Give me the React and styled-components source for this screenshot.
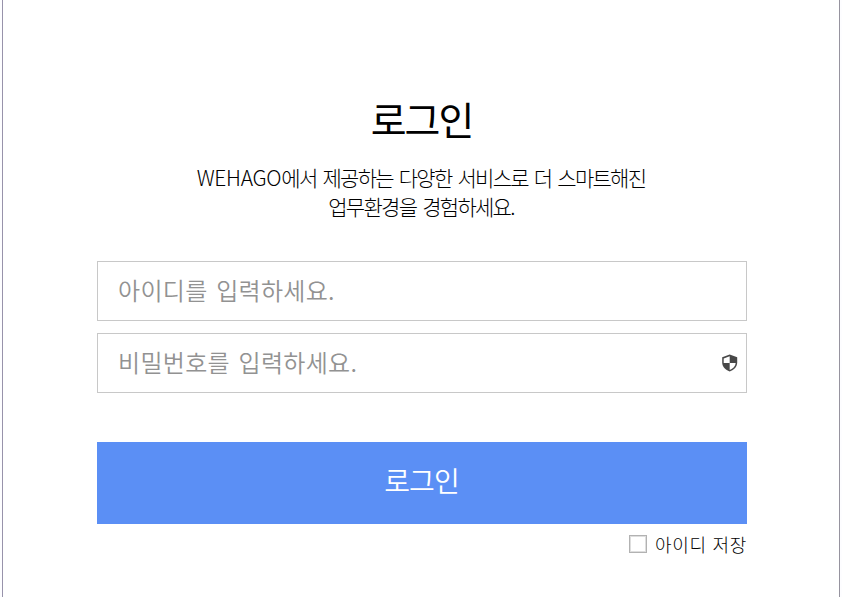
import React, {useState} from "react";
import styled, {createGlobalStyle} from "styled-components";

const GlobalStyle = createGlobalStyle`
    * {
        box-sizing: border-box;
    }

    body {
        margin: 0;
        background: #fdfdff;
        overflow: hidden;
        font-family: "Noto Sans CJK KR", sans-serif;
    }
`

function App() {
    const [userId, setUserId] = useState("");
    const [password, setPassword] = useState("");
    const [saveId, setSaveId] = useState(false);

    return (
        <>
            <GlobalStyle/>
            <LoginPanel>
                <LoginForm onSubmit={(e) => e.preventDefault()}>
                    <Title>로그인</Title>
                    <Description>
                        <Line><Brand>WEHAGO</Brand>에서 제공하는 다양한 서비스로 더 스마트해진</Line>
                        <Line>업무환경을 경험하세요.</Line>
                    </Description>
                    <InputBox>
                        <Input type="text" placeholder="아이디를 입력하세요." value={userId}
                               onChange={(e) => setUserId(e.target.value)}/>
                    </InputBox>
                    <InputBox>
                        <Input type="password" placeholder="비밀번호를 입력하세요." value={password}
                               onChange={(e) => setPassword(e.target.value)}/>
                        <ShieldIcon/>
                    </InputBox>
                    <LoginButton type="submit">로그인</LoginButton>
                    <SaveId>
                        <CheckBox type="checkbox" checked={saveId}
                                  onChange={(e) => setSaveId(e.target.checked)}/>
                        <span>아이디 저장</span>
                    </SaveId>
                </LoginForm>
            </LoginPanel>
        </>
    );
}

function ShieldIcon() {
    return (
        <svg width="16" height="18" viewBox="0 0 16 18">
            <path d="M7.7 .5 15.2 3.3V8.5C15.2 12.7 12.1 16 7.7 17.5 3.3 16 .2 12.7 .2 8.5V3.3Z" fill="#484848"/>
            <path d="M7.7 2.3V9H1.7V4.5Z" fill="#fff"/>
            <path d="M7.7 9H13.7C13.4 12.3 11.1 14.7 7.7 15.9Z" fill="#fff"/>
        </svg>
    );
}

const LoginPanel = styled.div`
    display: flex;
    justify-content: center;
    width: 838px;
    height: 597px;
    margin-left: 2px;
    border-left: 1px solid #9893ab;
    border-right: 1px solid #96939f;
    background: #fff;
`

const LoginForm = styled.form`
    display: flex;
    flex-direction: column;
    width: 650px;
    padding-top: 93px;
    margin-left: 2px;
`

const Title = styled.h1`
    margin: 0;
    padding-right: 1px;
    height: 50px;
    line-height: 50px;
    font-size: 39px;
    font-weight: 400;
    letter-spacing: -2px;
    text-align: center;
    color: #000;
`

const Description = styled.p`
    margin: 20px 0 40px;
    padding-right: 2px;
    font-size: 21px;
    font-weight: 300;
    letter-spacing: -1.72px;
    word-spacing: 3px;
    text-align: center;
    color: #000;
`

const Line = styled.span`
    display: block;
    height: 29px;
    line-height: 29px;
    white-space: nowrap;
`

const Brand = styled.span`
    letter-spacing: -.3px;
`

const InputBox = styled.div`
    display: flex;
    align-items: center;
    height: 60px;
    margin-bottom: 12px;
    padding: 0 8px 0 20px;
    border: 1px solid #c8c8c8;
`

const Input = styled.input`
    flex: 1;
    min-width: 0;
    padding: 0 0 4px;
    border: 0;
    outline: none;
    background: transparent;
    font-family: inherit;
    font-size: 24px;
    font-weight: 350;
    letter-spacing: .3px;
    word-spacing: 3px;

    &::placeholder {
        color: #929292;
        opacity: 1;
    }
`

const LoginButton = styled.button`
    height: 82px;
    margin-top: 37px;
    padding: 0 1px 6px 0;
    border: 0;
    background: #5b8ff5;
    color: #fff;
    font-family: inherit;
    font-size: 28px;
    font-weight: 350;
    letter-spacing: -1px;
`

const SaveId = styled.label`
    display: flex;
    align-items: center;
    justify-content: flex-end;
    gap: 8px;
    height: 40px;
    font-size: 18px;
    font-weight: 300;
    letter-spacing: .7px;
    word-spacing: 1px;
    color: #000;
`

const CheckBox = styled.input`
    appearance: none;
    width: 18px;
    height: 18px;
    margin: 0;
    border: 1px solid #b2b2b2;
    box-shadow: inset 0 0 0 1px #dedede;
    background: #fff;
`

export default App;
